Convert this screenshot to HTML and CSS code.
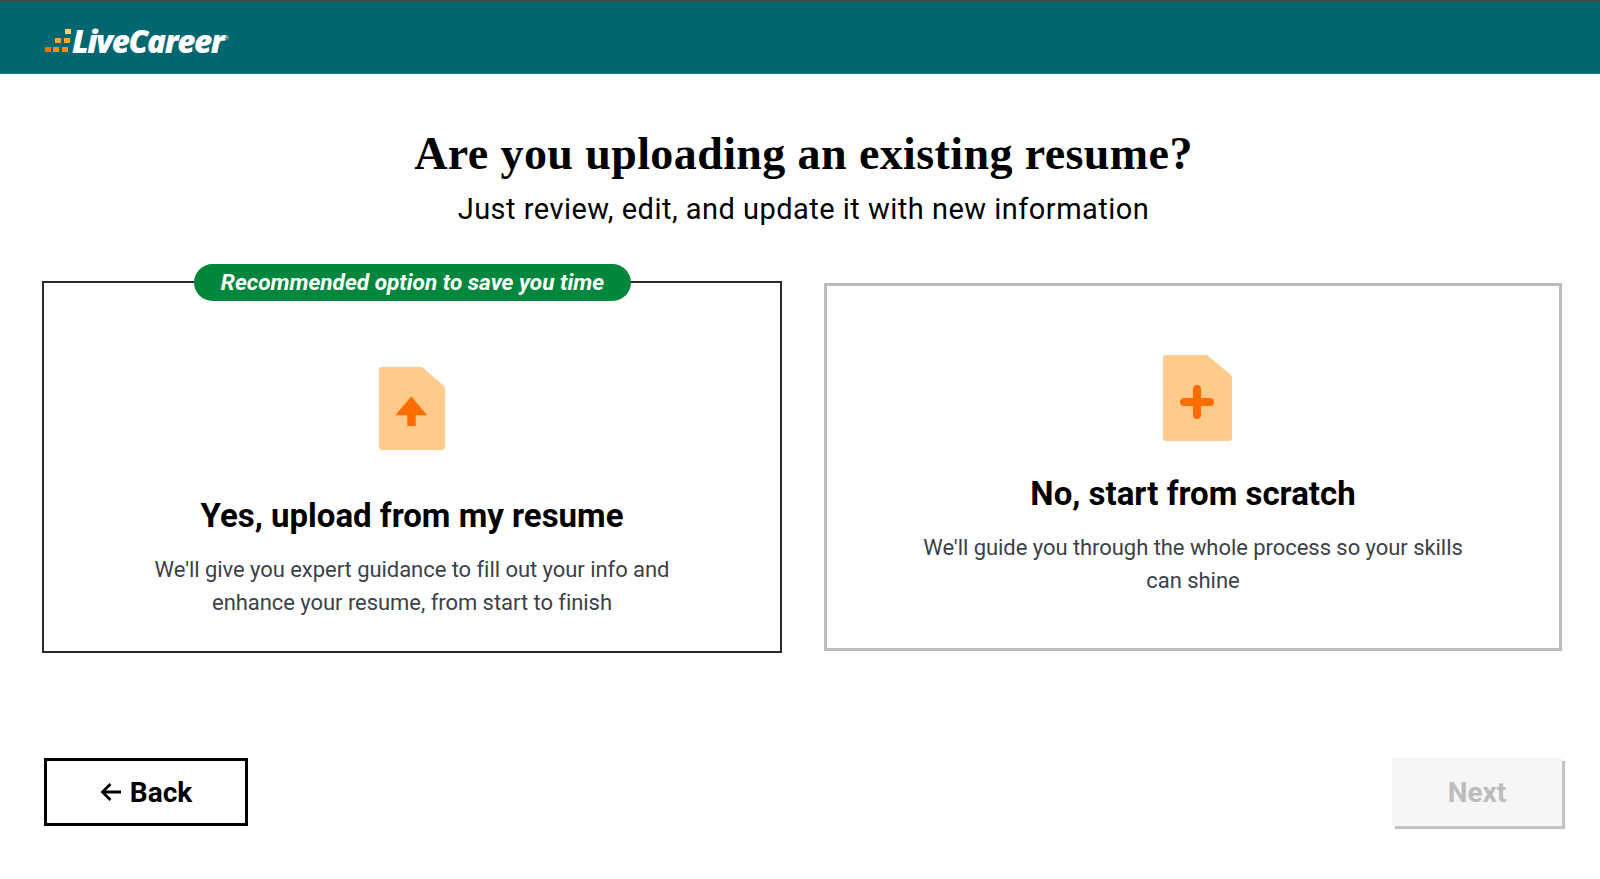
FILE: index.html
```html
<!DOCTYPE html>
<html lang="en">
<head>
    <meta charset="UTF-8">
    <meta name="viewport" content="width=device-width, initial-scale=1.0">
    <title>LiveCareer</title>
    <link rel="stylesheet" href="styles.css">
</head>
<body>
    <header class="topbar">
        <div class="logo">
            <svg class="logo-mark" width="26" height="24" viewBox="0 0 26 24">
                <rect x="0" y="18" width="6" height="5" fill="#ff7300"/>
                <rect x="8" y="18" width="6" height="5" fill="#ff8c1a"/>
                <rect x="17" y="18" width="6" height="5" fill="#ff8c1a"/>
                <rect x="10" y="9" width="6" height="5" fill="#ffa726"/>
                <rect x="19" y="9" width="6" height="5" fill="#ffa726"/>
                <rect x="20" y="0" width="6" height="5" fill="#ffcb80"/>
            </svg>
            <span class="logo-text">LiveCareer</span>
            <span class="logo-reg">®</span>
        </div>
    </header>

    <main class="content">
        <div class="intro">
            <h1>Are you uploading an existing resume?</h1>
            <p class="subtitle">Just review, edit, and update it with new information</p>
        </div>

        <div class="cards">
            <div class="card card-selected">
                <div class="badge">Recommended option to save you time</div>
                <svg class="doc-icon" width="66" height="83" viewBox="0 0 66 83">
                    <path d="M3 0H42a3 3 0 0 1 2 .8L65 19a3 3 0 0 1 1 2.2V80a3 3 0 0 1-3 3H3a3 3 0 0 1-3-3V3a3 3 0 0 1 3-3z" fill="#ffcb8a"/>
                    <path d="M32.300 29.300L48 48.300H36.700V59H28.300V48.300H16.300z" fill="#ff6d00"/>
                </svg>
                <h2>Yes, upload from my resume</h2>
                <p>We'll give you expert guidance to fill out your info and enhance your resume, from start to finish</p>
            </div>
            <div class="card card-plain">
                <svg class="doc-icon doc-new" width="69" height="86" viewBox="0 0 69 86">
                    <path d="M3 0H43a3 3 0 0 1 2 .8L68 20a3 3 0 0 1 1 2.2V83a3 3 0 0 1-3 3H3a3 3 0 0 1-3-3V3a3 3 0 0 1 3-3z" fill="#ffcb8a"/>
                    <path d="M34 34V60M21 47H47" stroke="#ff6d00" stroke-width="8" stroke-linecap="round" fill="none"/>
                </svg>
                <h2>No, start from scratch</h2>
                <p>We'll guide you through the whole process so your skills can shine</p>
            </div>
        </div>

        <div class="actions">
            <button class="btn btn-back">
                <svg width="22" height="20" viewBox="0 0 22 20">
                    <path d="M21 10H3M10.500 2L2.500 10l8 8" stroke="#000" stroke-width="2.800" fill="none"/>
                </svg>
                Back
            </button>
            <button class="btn btn-next">Next</button>
        </div>
    </main>
</body>
</html>
```

FILE: styles.css
```css
* {
    box-sizing: border-box;
}
body {
    margin: 0;
    height: 879px;
    overflow: hidden;
    background: #fff;
    color: #000;
    font-family: Roboto, Arial, sans-serif;
}
.topbar {
    height: 74px;
    background: #006670;
    border-top: 2px solid #3d4a4c;
    border-bottom: 1px solid #1a7a83;
    display: flex;
    align-items: center;
    padding: 7px 0 0 45px;
}
.logo {
    display: flex;
    align-items: center;
    color: #fff;
}
.logo-mark {
    margin-right: 1px;
    margin-top: -1px;
}
.logo-text {
    font-family: "Open Sans", Arial, sans-serif;
    font-weight: 800;
    font-style: italic;
    font-size: 31.5px;
    letter-spacing: -1.4px;
    line-height: 30px;
}
.logo-reg {
    font-size: 6px;
    margin-top: -8px;
    margin-left: 1px;
    opacity: 0.7;
}
.content {
    padding: 0 38px 0 42px;
}
.intro {
    padding-left: 3px;
}
h1 {
    margin: 52px 0 0;
    text-align: center;
    font-family: "Liberation Serif", "Times New Roman", serif;
    font-size: 46px;
    line-height: 56px;
    font-weight: 700;
    letter-spacing: 0.4px;
}
.subtitle {
    margin: 8px 0 0;
    text-align: center;
    font-size: 29px;
    line-height: 38px;
    letter-spacing: 0.48px;
}
.cards {
    display: grid;
    grid-template-columns: 740px 738px;
    column-gap: 42px;
    align-items: center;
    margin-top: 53px;
}
.card {
    position: relative;
    display: flex;
    flex-direction: column;
    align-items: center;
    text-align: center;
}
.card-selected {
    height: 372px;
    border: 2px solid #2a2a2a;
    padding-top: 84px;
}
.card-plain {
    height: 368px;
    border: 3px solid #bdbdbd;
    padding-top: 69px;
}
.badge {
    position: absolute;
    top: -19px;
    left: 150px;
    width: 437px;
    height: 37px;
    border-radius: 19px;
    background: #00873d;
    color: #fff;
    font-size: 22.6px;
    line-height: 37px;
    font-weight: 700;
    font-style: italic;
}
.doc-icon {
    display: block;
}
.doc-new {
    margin-left: 8px;
}
.card h2 {
    margin: 31px 0 0;
    font-size: 33px;
    line-height: 44px;
    font-weight: 700;
}
.card-selected h2 {
    margin-top: 44px;
}
.card p {
    margin: 15px 0 0;
    width: 560px;
    font-size: 22px;
    line-height: 33px;
    letter-spacing: -0.05px;
    color: #3c4149;
}
.card-selected p {
    width: 530px;
}
.actions {
    display: flex;
    justify-content: space-between;
    align-items: flex-start;
    margin-top: 105px;
    padding: 0 0 0 2px;
}
.btn {
    display: flex;
    align-items: center;
    justify-content: center;
    gap: 8px;
    height: 68px;
    font-family: Roboto, Arial, sans-serif;
    font-size: 28px;
    font-weight: 700;
    padding: 0;
}
.btn-back {
    width: 204px;
    background: #fff;
    border: 3px solid #000;
    color: #000;
}
.btn-next {
    width: 170px;
    background: #f6f6f6;
    border: none;
    color: #bdbdbd;
    box-shadow: 3px 3px 1px #c4c4c4;
}
```
